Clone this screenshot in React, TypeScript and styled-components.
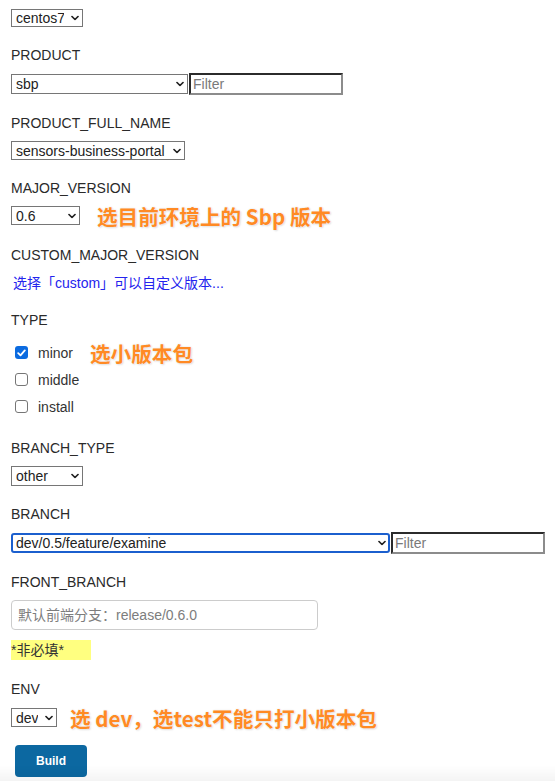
import React from "react";
import styled, { createGlobalStyle } from "styled-components";

const Global = createGlobalStyle`
  html, body { margin: 0; padding: 0; background: #fff; }
  body {
    font-family: "Liberation Sans", "Noto Sans CJK SC", Arial, sans-serif;
    color: #333;
  }
`;

const Form = styled.form`
  display: flex;
  flex-direction: column;
  gap: 20px;
  padding: 9px 0 40px 11px;
`;

const Field = styled.div<{ $gap?: number; $mt?: number }>`
  display: flex;
  flex-direction: column;
  align-items: flex-start;
  gap: ${(p) => p.$gap ?? 10}px;
  margin-top: ${(p) => p.$mt ?? 0}px;
`;

const Label = styled.div`
  font-size: 14px;
  line-height: 16px;
  color: #2a2a2a;
`;

const Row = styled.div`
  display: flex;
  align-items: center;
`;

const SelectWrap = styled.div<{ $w: number; $h: number }>`
  position: relative;
  flex: none;
  width: ${(p) => p.$w}px;
  height: ${(p) => p.$h}px;
`;

const NativeSelect = styled.select<{ $focus?: boolean }>`
  appearance: none;
  -webkit-appearance: none;
  box-sizing: border-box;
  width: 100%;
  height: 100%;
  margin: 0;
  border: ${(p) => (p.$focus ? "2px solid #1b5fce" : "1px solid #767676")};
  border-radius: ${(p) => (p.$focus ? "3px" : "0")};
  background: #fff;
  color: #222;
  font: 14px "Liberation Sans", "Noto Sans CJK SC", sans-serif;
  padding: 0 18px 0 ${(p) => (p.$focus ? 3 : 4)}px;
  outline: none;
`;

const Chevron = styled.svg`
  position: absolute;
  right: 4px;
  top: 50%;
  transform: translateY(-50%);
  pointer-events: none;
`;

const FilterInput = styled.input`
  box-sizing: border-box;
  flex: none;
  width: 154px;
  height: 22px;
  margin: 0 0 0 1px;
  border-style: solid;
  border-width: 2px;
  border-color: #2b2b2b #8c8c8c #8c8c8c #2b2b2b;
  background: #fff;
  font: 14px "Liberation Sans", sans-serif;
  padding: 0 2px;
  color: #222;
  outline: none;
  &::placeholder {
    color: #7a7a7a;
  }
`;

const Note = styled.span<{ $ml: number }>`
  margin-left: ${(p) => p.$ml}px;
  font: 700 20.6px "Noto Sans CJK SC", sans-serif;
  line-height: 16px;
  color: #ff8a24;
  white-space: nowrap;
  text-shadow: 0 0 1px #fff, 0 0 2px #ddd, 1px 1px 2px rgba(0, 0, 0, 0.12);
`;

const Hint = styled.div`
  padding-left: 2px;
  font-size: 14px;
  line-height: 16px;
  color: #2424ee;
`;

const CheckList = styled.div`
  display: flex;
  flex-direction: column;
`;

const CheckRow = styled.label`
  display: flex;
  align-items: center;
  height: 27px;
  padding-left: 4px;
  font-size: 14px;
  color: #333;
`;

const Box = styled.span<{ $checked?: boolean }>`
  box-sizing: border-box;
  flex: none;
  width: 13px;
  height: 13px;
  margin-right: 10px;
  border-radius: 3px;
  display: flex;
  align-items: center;
  justify-content: center;
  background: ${(p) => (p.$checked ? "#0b6be0" : "#fff")};
  border: ${(p) => (p.$checked ? "none" : "1px solid #767676")};
`;

const TextInput = styled.input`
  box-sizing: border-box;
  width: 307px;
  height: 30px;
  margin: 0;
  border: 1px solid #cccccc;
  border-radius: 4px;
  padding: 0 6px;
  font: 14px "Liberation Sans", "Noto Sans CJK SC", sans-serif;
  color: #333;
  outline: none;
  &::placeholder {
    color: #7d7d7d;
  }
`;

const Optional = styled.div`
  width: 80px;
  height: 20px;
  line-height: 20px;
  background: #ffff80;
  font-size: 14px;
  color: #333;
`;

const BuildButton = styled.button`
  margin-left: 4px;
  width: 72px;
  height: 32px;
  border: none;
  border-radius: 4px;
  background: #0c68a1;
  color: #fff;
  font: 700 12px "Liberation Sans", sans-serif;
  cursor: pointer;
`;

const FooterShade = styled.div`
  position: fixed;
  left: 0;
  right: 0;
  bottom: 0;
  height: 16px;
  pointer-events: none;
  background: linear-gradient(rgba(0, 0, 0, 0), rgba(0, 0, 0, 0.045));
`;

type SelectProps = { w: number; h: number; value: string; focus?: boolean };

function Select({ w, h, value, focus }: SelectProps) {
  return (
    <SelectWrap $w={w} $h={h}>
      <NativeSelect $focus={focus} defaultValue={value}>
        <option value={value}>{value}</option>
      </NativeSelect>
      <Chevron width="8" height="5" viewBox="0 0 8 5">
        <path d="M1 1 L4 4 L7 1" fill="none" stroke="#222" strokeWidth="1.7" strokeLinecap="round" strokeLinejoin="round" />
      </Chevron>
    </SelectWrap>
  );
}

function Check({ label, checked, children }: { label: string; checked?: boolean; children?: React.ReactNode }) {
  return (
    <CheckRow>
      <Box $checked={checked}>
        {checked && (
          <svg width="9" height="8" viewBox="0 0 9 8">
            <path d="M1.2 4.2 L3.5 6.4 L7.8 1.4" fill="none" stroke="#fff" strokeWidth="1.8" strokeLinecap="round" strokeLinejoin="round" />
          </svg>
        )}
      </Box>
      {label}
      {children}
    </CheckRow>
  );
}

export default function App() {
  return (
    <>
      <Global />
      <Form onSubmit={(e) => e.preventDefault()}>
        <Field>
          <Select w={72} h={18} value="centos7" />
        </Field>
        <Field>
          <Label>PRODUCT</Label>
          <Row>
            <Select w={177} h={20} value="sbp" />
            <FilterInput placeholder="Filter" />
          </Row>
        </Field>
        <Field>
          <Label>PRODUCT_FULL_NAME</Label>
          <Select w={174} h={19} value="sensors-business-portal" />
        </Field>
        <Field>
          <Label>MAJOR_VERSION</Label>
          <Row>
            <Select w={69} h={19} value="0.6" />
            <Note $ml={17}>选目前环境上的 Sbp 版本</Note>
          </Row>
        </Field>
        <Field $gap={12} $mt={2}>
          <Label>CUSTOM_MAJOR_VERSION</Label>
          <Hint>选择「custom」可以自定义版本...</Hint>
        </Field>
        <Field $gap={11} $mt={1}>
          <Label>TYPE</Label>
          <CheckList>
            <Check label="minor" checked>
              <Note $ml={17}>选小版本包</Note>
            </Check>
            <Check label="middle" />
            <Check label="install" />
          </CheckList>
        </Field>
        <Field>
          <Label>BRANCH_TYPE</Label>
          <Select w={72} h={20} value="other" />
        </Field>
        <Field>
          <Label>BRANCH</Label>
          <Row>
            <Select w={379} h={20} value="dev/0.5/feature/examine" focus />
            <FilterInput placeholder="Filter" />
          </Row>
        </Field>
        <Field>
          <Label>FRONT_BRANCH</Label>
          <TextInput placeholder="默认前端分支：release/0.6.0" />
          <Optional>*非必填*</Optional>
        </Field>
        <Field $gap={11} $mt={1}>
          <Label>ENV</Label>
          <Row>
            <Select w={46} h={19} value="dev" />
            <Note $ml={13}>选 dev，选test不能只打小版本包</Note>
          </Row>
        </Field>
        <Field $mt={-2}>
          <BuildButton type="button">Build</BuildButton>
        </Field>
      </Form>
      <FooterShade />
    </>
  );
}
